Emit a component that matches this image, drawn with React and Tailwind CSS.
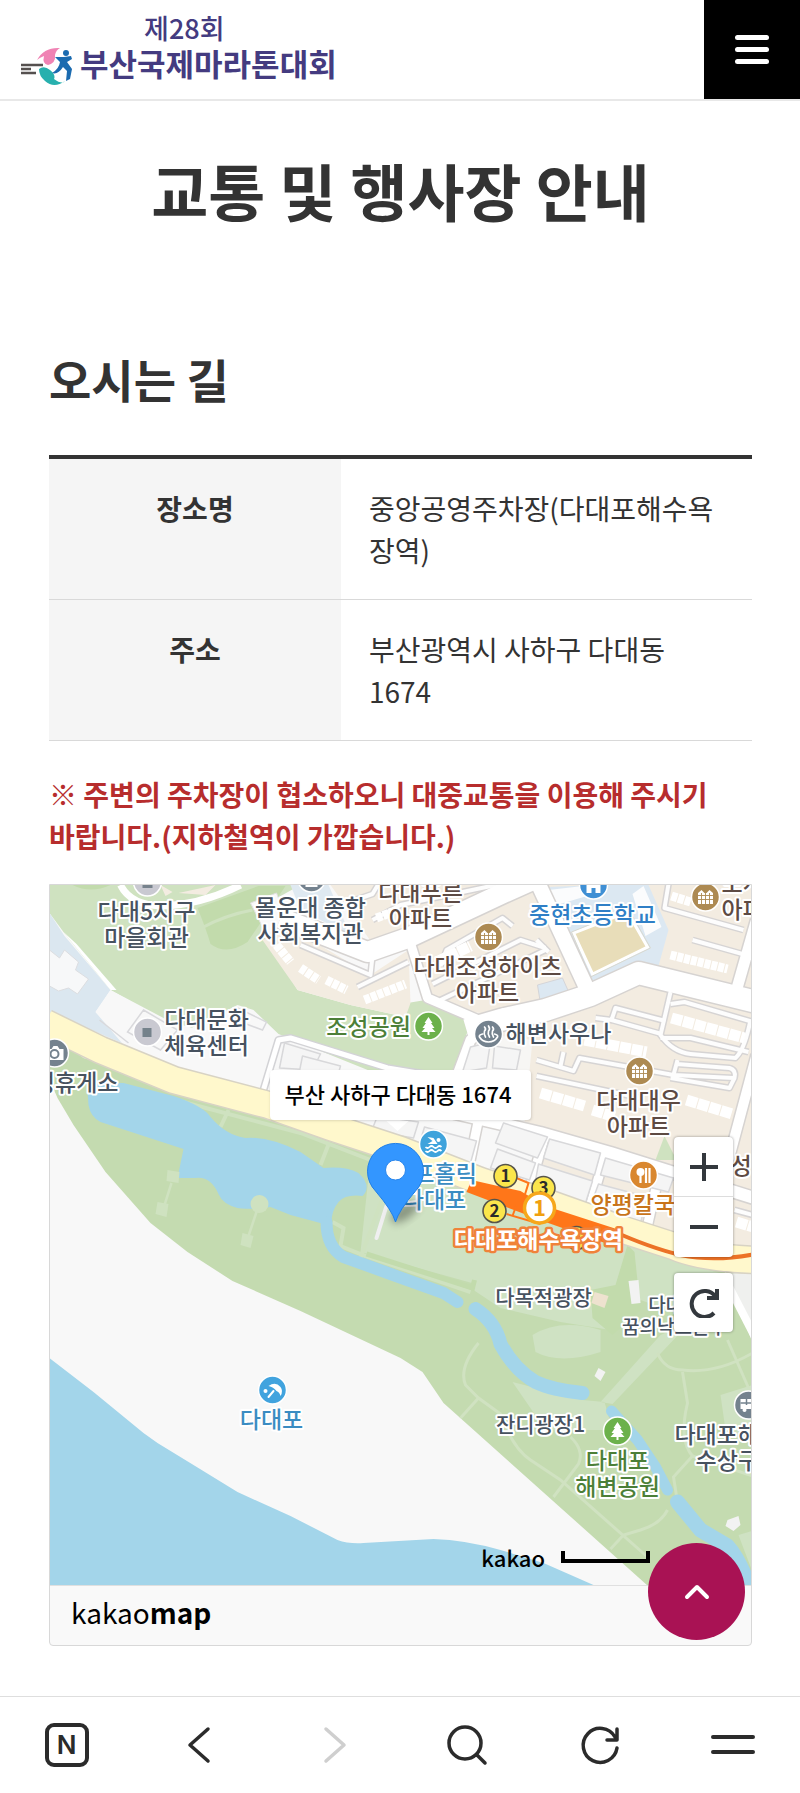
import React from 'react';

const places = [
    { label: '장소명', value: '중앙공영주차장(다대포해수욕장역)' },
    { label: '주소', value: '부산광역시 사하구 다대동 1674' },
];

const GRAY = '#47525f';
const BROWN = '#5d4a43';
const GREEN = '#4c7f38';
const BLUE = '#2f7fc6';
const SKY = '#3a8cc2';

// x is the anchor point, y the baseline of the first line
const mapLabels = [
    { x: 146, y: 920, fill: GRAY, lines: ['다대5지구', '마을회관'] },
    { x: 310, y: 916, fill: GRAY, lines: ['몰운대 종합', '사회복지관'] },
    { x: 420, y: 901, fill: BROWN, lines: ['다대푸른', '아파트'] },
    { x: 487, y: 975, fill: BROWN, lines: ['다대조성하이츠', '아파트'] },
    { x: 592, y: 923, fill: BLUE, lines: ['중현초등학교'] },
    { x: 721, y: 892, fill: BROWN, anchor: 'start', lines: ['도시', '아파트'] },
    { x: 368, y: 1035, fill: GREEN, lines: ['조성공원'] },
    { x: 558, y: 1042, fill: GRAY, lines: ['해변사우나'] },
    { x: 206, y: 1028, fill: GRAY, lines: ['다대문화', '체육센터'] },
    { x: 118, y: 1091, fill: GRAY, anchor: 'end', lines: ['성휴게소'] },
    { x: 638, y: 1109, fill: BROWN, lines: ['다대대우', '아파트'] },
    { x: 590, y: 1213, fill: '#c8741a', anchor: 'start', lines: ['양평칼국수'] },
    { x: 730, y: 1174, fill: BROWN, anchor: 'start', lines: ['성원'] },
    { x: 434, y: 1182, fill: SKY, lines: ['서프홀릭', '다대포'] },
    { x: 543, y: 1305, fill: GRAY, size: 21, lines: ['다목적광장'] },
    { x: 674, y: 1312, fill: GRAY, size: 19, gap: 22, lines: ['다대포', '꿈의낙조분수'] },
    { x: 540, y: 1432, fill: GRAY, size: 21, lines: ['잔디광장1'] },
    { x: 271, y: 1428, fill: SKY, lines: ['다대포'] },
    { x: 617, y: 1469, fill: GREEN, lines: ['다대포', '해변공원'] },
    { x: 748, y: 1443, fill: GRAY, lines: ['다대포해수욕장', '수상구조대'] },
];

const mainRoads = [
    { w: 20, d: 'M280 918 L367 952 L407 938 L503 893 L550 872' },
    { w: 22, d: 'M466 1030 L500 1020 L545 1010 L590 995 L638 973 L760 1003' },
    { w: 15, d: 'M536 880 L588 992' },
    { w: 9, d: 'M409 940 L427 998 L478 1020' },
    { w: 11, d: 'M756 920 L736 990' },
    { w: 10, d: 'M756 1055 L728 1160' },
    { w: 10, d: 'M505 1012 L470 1040 L455 1080' },
    { w: 12, d: 'M380 1095 L450 1112 L540 1133 L610 1153 L680 1175 L760 1200' },
    { w: 9, d: 'M480 1110 L468 1168 M546 1130 L530 1185 M606 1150 L588 1212 M660 1168 L646 1230' },
];

const lanes = [
    'M692 940 L742 954',
    'M668 884 L664 908 L743 930',
    'M670 992 L660 1035 Q672 1052 690 1054 L735 1058 Q744 1050 750 1020',
    'M670 1004 L684 1002 L756 1023',
    'M595 1018 L611 1020 L615 1008 L665 1021',
    'M611 1020 L661 1034',
    'M660 1038 L690 1038 L748 1052',
    'M677 1060 L673 1075 L733 1078 M676 1064 L729 1068 Q736 1070 734 1078 L729 1088 L670 1078',
    'M536 1060 L573 1071 L579 1058 L673 1075',
    'M563 1052 L560 1066',
    'M536 1076 L640 1098',
    'M357 987 L408 962',
    'M300 945 L370 975 L372 956',
    'M440 966 L446 950 L502 918 L512 926',
    'M432 984 L520 940 L545 948',
    'M340 905 L372 894 L378 884',
    'M372 920 L400 905 L500 884',
    'M440 1000 L520 962 L545 950',
    'M536 940 L548 952',
    'M736 1190 L756 1196 M734 1210 L756 1216',
];

const blocks = [
    'M503 1123 L547 1137 L537 1158 L495 1143 Z',
    'M497 1149 L535 1163 L529 1180 L490 1168 Z',
    'M424 1127 L476 1141 L470 1163 L418 1147 Z',
    'M377 1116 L418 1122 L413 1138 L371 1131 Z',
    'M549 1139 L600 1153 L594 1175 L543 1158 Z',
    'M538 1164 L592 1181 L585 1203 L534 1186 Z',
    'M605 1158 L673 1178 L668 1192 L600 1175 Z',
    'M598 1184 L647 1197 L640 1223 L591 1203 Z',
    'M284 1043 L320 1054 L312 1070 L279 1068 Z',
    'M302 1056 L340 1066 L336 1080 L298 1076 Z',
    'M470 1047 L490 1042 L486 1068 L462 1072 Z',
    'M494 1046 L520 1050 L516 1070 L492 1068 Z',
];

const parkPaths = [
    'M478 1343 Q458 1368 465 1385 L478 1398 L500 1414 Q512 1448 530 1460 L560 1480 L647 1557',
    'M478 1398 L460 1418',
    'M570 1437 Q584 1450 578 1464 L553 1497',
    'M667 1510 Q660 1524 640 1530 L623 1535 L610 1549',
    'M657 1353 Q664 1370 682 1370 Q716 1374 752 1353',
    'M682 1372 L687 1403 Q678 1440 692 1456 L673 1477 L676 1496',
    'M727 1340 L748 1388',
    'M692 1456 L752 1476',
];

function Spot({ x, y, fill, children }) {
    return (
        <g transform={`translate(${x} ${y})`}>
            <circle r="14" fill={fill} stroke="#fff" strokeWidth="1.5" />
            {children}
        </g>
    );
}

function Apartment({ x, y }) {
    return (
        <Spot x={x} y={y} fill="#ad8a52">
            <path d="M-7.5 7 V-4 L-4 -7 L-1 -4 L1 -4 L4 -7 L7.5 -4 V7 Z" fill="#fff" />
            <path d="M-7.5 -1.5 H7.5 M-7.5 2.5 H7.5 M-4 -4 V7 M0 -4 V7 M4 -4 V7" stroke="#ad8a52" strokeWidth=".9" />
        </Spot>
    );
}

function Tree({ x, y }) {
    return (
        <Spot x={x} y={y} fill="#6cb14b">
            <path d="M0 -9 L4 -3 H2.5 L6 2 H3.5 L7 6 H1 V9 H-1 V6 H-7 L-3.5 2 H-6 L-2.5 -3 H-4 Z" fill="#fff" />
        </Spot>
    );
}

function Exit({ x, y, n }) {
    return (
        <g>
            <circle cx={x} cy={y} r="11.5" fill="#fbe64c" stroke="#57544a" strokeWidth="1.6" />
            <text x={x} y={y + 6} textAnchor="middle" fontSize="17" fontWeight="700" fill="#2b2b2b">{n}</text>
        </g>
    );
}

function MapDrawing() {
    return (
        <svg
            viewBox="49 885 702 700"
            preserveAspectRatio="xMidYMid slice"
            className="block h-[700px] w-full font-['Noto_Sans_CJK_KR',sans-serif]"
            role="img"
            aria-label="다대포해수욕장역 주변 지도"
        >
            <defs>
                <filter id="soft" x="-50%" y="-50%" width="200%" height="200%">
                    <feGaussianBlur stdDeviation="4" />
                </filter>
            </defs>
            <rect x="40" y="880" width="720" height="720" fill="#f8f8f8" />

            {/* hillside park */}
            <path d="M49 885 H300 L273 900 L262 930 L297 990 L350 1005 L405 1017 L407 1003 L425 1000 L472 1018 L450 1078 L387 1078 L278 1034 L253 1010 L237 1005 L183 1032 L163 1018 L110 990 L63 932 L49 913 Z" fill="#cfe2c0" />
            <path d="M258 886 L197 908 Q206 930 210 944 Q226 956 247 942 L262 920 L285 886 Z M72 885 Q90 894 110 885 Z" fill="#c2dbac" />
            <path d="M201 928 Q225 915 252 910" fill="none" stroke="#cfe2c0" strokeWidth="3" />
            <path d="M49 913 L64 936 L110 990 L95 1012 L126 1045 L49 1012 Z" fill="#dbe7f0" />
            <path d="M49 950 L59 958 L64 950 L78 962 L75 970 L88 979 L77 994 L68 988 L58 991 L49 986 Z" fill="#f7f8f9" stroke="#dcdde0" />
            <path d="M63 932 L110 990 L116 990 L76 944 Z" fill="#fff" />
            <path d="M110 990 L163 1020 L200 1030 L278 1036 L262 1092 L124 1046 L95 1012 Z" fill="#f8f8f8" />
            <path d="M143 1010 L177 1030 L160 1050 L127 1032 Z M99 1020 L128 1043 M237 1008 L266 1022 L262 1030 L235 1020 Z" fill="none" stroke="#d9d9dc" strokeWidth="1.5" />
            <path d="M262 1093 L278 1040 L290 1038 L387 1068 L460 1080" fill="none" stroke="#d3d3d6" strokeWidth="8" strokeLinejoin="round" />
            <path d="M262 1093 L278 1040 L290 1038 L387 1068 L460 1080" fill="none" stroke="#fff" strokeWidth="5" strokeLinejoin="round" />
            <path d="M120 885 Q130 905 160 906 Q200 905 240 885" fill="none" stroke="#fff" strokeWidth="7" />
            <path d="M160 885 L172 892 L165 896 M178 893 L215 885 L205 895 Z" fill="#f3ece1" />

            {/* housing */}
            <path d="M262 940 L290 928 L370 975 L408 950 L410 1003 L405 1017 L350 1005 L297 990 Z" fill="#f3ece1" />
            <path d="M330 885 H755 V1250 L673 1235 L547 1195 L530 1130 L470 1110 L500 1015 L470 1012 L430 1000 L413 950 L373 945 Z" fill="#f3ece1" />
            <path d="M470 1032 L532 1040 L524 1122 L450 1105 Z" fill="#f7f6f4" />
            <path d="M290 885 H328 L350 935 L300 910 Z" fill="#dfe9f1" />
            <path d="M250 903 L276 893 L288 925 L266 935 Z" fill="#f8f8f8" stroke="#e0e0e0" />
            <path d="M547 887 L600 885 H648 L668 930 L658 966 L638 963 L588 988 Z" fill="#dce8f2" />
            <path d="M537 985 L562 978 L570 996 L541 1010 Z" fill="#dce8f2" stroke="#d5d5d8" />
            <path d="M632 894 L643 886 L661 927 L645 936 Z M548 890 L600 884 L590 895 L556 905 Z" fill="#fbfcfd" />
            <path d="M573 933 L627 912 L647 947 L592 974 Z" fill="#e8ddb9" stroke="#fff" strokeWidth="3" />
            <path d="M571 932 L628 909 L650 948 L590 977 Z" fill="none" stroke="#d9d9d0" />

            {mainRoads.map((r) => (
                <path key={r.d} d={r.d} fill="none" stroke="#d6d3d1" strokeWidth={r.w + 3} strokeLinejoin="round" />
            ))}
            {lanes.map((d) => (
                <path key={d} d={d} fill="none" stroke="#d6d4d4" strokeWidth="7" strokeLinejoin="round" />
            ))}
            {lanes.map((d) => (
                <path key={d} d={d} fill="none" stroke="#fdfdfd" strokeWidth="4" strokeLinejoin="round" />
            ))}
            {mainRoads.map((r) => (
                <path key={r.d} d={r.d} fill="none" stroke="#fff" strokeWidth={r.w} strokeLinejoin="round" />
            ))}
            {blocks.map((d) => (
                <path key={d} d={d} fill="#f5f5f5" stroke="#d8d8da" strokeWidth="1.5" strokeLinejoin="round" />
            ))}

            {/* rows of houses */}
            <g fill="none" stroke="#fff" strokeWidth="9" strokeDasharray="6 1">
                <path d="M670 955 L727 969" />
                <path d="M671 896 L690 902" />
                <path d="M300 968 L318 980 M326 980 L346 990" />
                <path d="M364 1000 L405 984" />
                <path d="M276 945 L290 962" />
                <path d="M376 918 L392 912" />
            </g>
            <g fill="none" stroke="#fff" strokeWidth="11" strokeDasharray="11 1">
                <path d="M671 1018 L744 1038" />
                <path d="M584 1040 L646 1052" />
                <path d="M540 1093 L584 1106" />
                <path d="M686 1100 L732 1114" />
                <path d="M592 1110 L615 1117" />
                <path d="M736 1222 L756 1228" />
                <path d="M436 962 L470 946" />
            </g>
            <path d="M664 1136 L676 1160 L655 1160 Z" fill="#cfe2c0" />

            {/* seaside park */}
            <path d="M45 1030 L83 1058 L173 1085 L300 1125 L368 1145 L470 1180 L640 1243 L720 1268 L755 1270 V1590 H652 L443 1403 L422 1372 L400 1358 L383 1350 L300 1311 L232 1281 L187 1252 L150 1223 L105 1172 L73 1125 L57 1098 L45 1070 Z" fill="#c4dbb0" />
            <path d="M370 1158 L470 1186 L640 1250 L722 1274 L734 1300 L690 1318 L640 1300 L610 1330 L560 1322 L500 1308 L473 1290 L475 1284 L360 1252 Z" fill="#cfe2c3" />
            <path d="M720 1274 L755 1272 V1350 L735 1300 Z" fill="#eff0ee" />
            <path d="M722 1274 L756 1340" stroke="#fff" strokeWidth="8" />
            <path d="M627 1245 L634 1252 L640 1310 L612 1335 L592 1318 L590 1290 L615 1285 Z" fill="#c2dbac" />
            <path d="M660 1335 L600 1402 L612 1404 L690 1322 Z M532 1335 Q560 1318 600 1330 L600 1352 Q560 1365 535 1352 Z M512 1382 L582 1400 L604 1402 L612 1430 H545 Z M720 1395 L752 1385 V1440 L725 1430 Z M738 1535 L755 1530 V1580 Z" fill="#cfe2c3" />
            <path d="M160 1096 L300 1133 L370 1160 M228 1110 L220 1127 M329 1142 L320 1165 M385 1190 L360 1258 M332 1222 L343 1228 L340 1246 L365 1256 L470 1292" fill="none" stroke="#cfe2c0" strokeWidth="4" />
            <path d="M366 1254 L472 1288 L474 1280" fill="none" stroke="#c2dbac" strokeWidth="5" />
            {parkPaths.map((d) => (
                <path key={d} d={d} fill="none" stroke="#d0e2c1" strokeWidth="3" />
            ))}

            {/* water */}
            <g fill="#a3d5ea">
                <path d="M86 1077 Q100 1083 123 1083 L173 1096 Q203 1106 210 1117 Q225 1135 245 1138 Q268 1136 300 1152 L323 1168 Q345 1166 358 1173 Q372 1186 362 1196 Q345 1194 338 1202 Q330 1212 331 1226 L290 1215 L270 1207 Q245 1210 237 1208 Q222 1204 218 1194 Q210 1176 195 1178 L177 1178 L183 1149 L100 1122 Q90 1117 88 1105 Z" />
                <path d="M45 1355 L93 1392 L143 1433 L157 1443 L193 1465 L237 1492 L290 1516 L337 1540 Q348 1544 363 1543 L433 1539 Q465 1540 500 1550 L543 1563 L593 1585 V1590 H45 Z" />
            </g>
            <g fill="none" stroke="#a3d5ea" strokeLinecap="round" strokeLinejoin="round">
                <path d="M326 1222 Q326 1247 343 1257 L390 1274 L443 1293 L457 1302" strokeWidth="12" />
                <path d="M475 1309 Q495 1322 500 1344 Q514 1370 535 1382 Q552 1390 582 1393" strokeWidth="14" />
                <path d="M611 1411 L637 1440 L655 1467 L667 1490" strokeWidth="11" />
                <path d="M677 1502 L700 1530 L727 1546 Q738 1558 748 1585" strokeWidth="15" />
            </g>
            <g fill="#cfe2c0">
                <path d="M167 1170 L179 1172 L178 1183 L166 1181 Z M157 1202 L168 1204 L166 1217 L155 1214 Z M242 1233 L253 1236 L250 1248 L240 1245 Z" />
                <circle cx="259" cy="1204" r="9" />
                <path d="M171 1183 L164 1205 M256 1212 L248 1236" stroke="#cfe2c0" strokeWidth="2.5" />
            </g>
            <path d="M386 1206 L376 1238" stroke="#efeff0" strokeWidth="4" strokeLinecap="round" />
            <path d="M598 1368 L605 1372 L600 1381 L594 1376 Z M628 1281 L638 1280 L640 1303 L631 1304 Z M727 1520 L738 1516 L740 1525 L733 1531 L725 1526 Z" fill="#f2f2f2" />
            <path d="M594 1292 L608 1296 L604 1308 L591 1303 Z" fill="#eee2cf" />

            {/* coastal road and subway line */}
            <path d="M45 1023 L100 1050 L173 1080 L268 1105 L330 1127 L400 1150 L480 1181 L547 1203 L620 1229 L673 1246 Q700 1258 755 1260" fill="none" stroke="#d8d3c4" strokeWidth="29" />
            <path d="M45 1023 L100 1050 L173 1080 L268 1105 L330 1127 L400 1150 L480 1181 L547 1203 L620 1229 L673 1246 Q700 1258 755 1260" fill="none" stroke="#fff8cc" strokeWidth="26" />
            <path d="M471 1180 L520 1191 L545 1206 L616 1229 L613 1246 L545 1222 L466 1192 Z" fill="#ff7619" />
            <path d="M516 1178 L528 1183 L524 1196 M506 1214 L540 1224 M516 1205 L512 1216" fill="none" stroke="#ff7619" strokeWidth="2" />
            <path d="M610 1230 Q650 1248 680 1255 Q715 1262 755 1254" fill="none" stroke="#ec7226" strokeWidth="4" />

            {/* points of interest */}
            <Spot x="147" y="882" fill="#c9c9d1"><rect x="-5" y="1" width="10" height="5" fill="#77828c" /></Spot>
            <Spot x="311" y="878" fill="#74828e"><path d="M-6 8 H6" stroke="#fff" strokeWidth="2" /></Spot>
            <Spot x="147" y="1032" fill="#c9c9d1"><rect x="-5" y="-4" width="9" height="9" fill="#75828b" /></Spot>
            <Spot x="54" y="1053" fill="#74828e">
                <path d="M-8 -4 H-3 L-1 -7 H3 L5 -4 H9 V7 H-8 Z" fill="#fff" />
                <circle r="4" cy="1" fill="#fff" stroke="#74828e" strokeWidth="2" />
            </Spot>
            <Spot x="593" y="885" fill="#3f8fd4"><path d="M-7 8 V0 L0 -5 L7 0 V8 H2 V3 H-2 V8 Z" fill="#fff" /></Spot>
            <Apartment x="488" y="937" />
            <Apartment x="705" y="897" />
            <Apartment x="639" y="1071" />
            <Tree x="428" y="1026" />
            <Tree x="617" y="1431" />
            <Spot x="488" y="1034" fill="#74828e">
                <path d="M-6 0 Q-10 1 -9 3 Q-6 8 0 8 Q6 8 9 3 Q10 1 6 0 M-4 -7 Q-2 -5 -4 -3 Q-5 0 -3 3 M0 -8 Q2 -5 0 -3 Q-1 0 1 3 M4 -7 Q6 -5 4 -3 Q3 0 5 3" fill="none" stroke="#fff" strokeWidth="1.7" strokeLinecap="round" />
            </Spot>
            <Spot x="433" y="1144" fill="#3fa3dc">
                <path d="M-8 3 Q-6 5 -4 3 Q-2 1 0 3 Q2 5 4 3 Q6 1 8 3 M-8 7 Q-6 9 -4 7 Q-2 5 0 7 Q2 9 4 7 Q6 5 8 7" fill="none" stroke="#fff" strokeWidth="1.7" />
                <path d="M-6 -7 L0 -6 L4 0 L-6 0 L-1 -3 Z" fill="#fff" />
                <circle cx="5" cy="-4" r="2" fill="#fff" />
            </Spot>
            <Spot x="643" y="1175" fill="#d9872f">
                <circle cx="-3" cy="-3" r="4" fill="#fff" />
                <path d="M-3 0 V8 M2.500 -7 V8 M6 -7 V8" stroke="#fff" strokeWidth="2.200" />
            </Spot>
            <Spot x="272" y="1390" fill="#41a3de">
                <path d="M-4 -4 Q3 -9 8 -3 Q11 1 8 6 Q7 2 4 1 Q1 -3 -4 -4 Z" fill="#fff" />
                <path d="M1 1 L-4 7" stroke="#fff" strokeWidth="2" strokeLinecap="round" />
                <circle cx="-7" cy="1" r="2" fill="#fff" />
            </Spot>
            <Spot x="748" y="1405" fill="#74828e">
                <path d="M-8 -6 H8 V4 H-8 Z" fill="#fff" />
                <path d="M-8 -2 H8 M-2 -6 V0" stroke="#74828e" strokeWidth="1.5" />
                <circle cx="-4" cy="5" r="2" fill="#fff" />
            </Spot>

            {mapLabels.map((l) => (
                <text
                    key={`${l.x}-${l.y}`}
                    textAnchor={l.anchor || 'middle'}
                    fontSize={l.size || 23}
                    fontWeight="500"
                    fill={l.fill}
                    stroke="#fff"
                    strokeWidth="4"
                    strokeLinejoin="round"
                    paintOrder="stroke"
                >
                    {l.lines.map((line, i) => (
                        <tspan key={line} x={l.x} y={l.y + i * (l.gap || 26)}>{line}</tspan>
                    ))}
                </text>
            ))}

            {/* station, exit 4 sits behind its name */}
            <Exit x={505} y={1176} n="1" />
            <Exit x={494} y={1211} n="2" />
            <Exit x={543} y={1188} n="3" />
            <Exit x={576} y={1238} n="4" />
            <circle cx="539" cy="1208" r="15" fill="#fff" stroke="#f6a71b" strokeWidth="3.500" />
            <text x="539" y="1216" textAnchor="middle" fontSize="22" fontWeight="700" fill="#f0a010">1</text>
            <text x="538" y="1248" textAnchor="middle" fontSize="23" fontWeight="700" fill="#fff" stroke="#f0823a" strokeWidth="5" strokeLinejoin="round" paintOrder="stroke">다대포해수욕장역</text>

            {/* marker */}
            <ellipse cx="404" cy="1212" rx="16" ry="7" fill="#000" opacity=".35" transform="rotate(-35 404 1212)" filter="url(#soft)" />
            <path d="M395 1222 Q392 1211 375 1191 A28 28 0 1 1 415 1191 Q398 1211 395 1222 Z" fill="#3396ff" stroke="#1f7fe8" strokeWidth="1" />
            <circle cx="395" cy="1170" r="10" fill="#fff" stroke="#2a86ec" />
            <path d="M386 1121 H408 L397 1131 Z" fill="#fff" />
        </svg>
    );
}

function Logo() {
    return (
        <a href="#home" className="flex items-end pl-5 text-[#443b80]">
            <svg viewBox="0 0 54 42" className="mb-3 h-[42px] w-[54px]" aria-hidden="true">
                <path d="M1 20 H23 M1 24 H11 M1 28 H16" stroke="#55504f" strokeWidth="2.5" />
                <path d="M17 15 Q24 2 40 3 Q36 5 35 10 Q36 18 28 20 Q22 19 24 11 Q19 13 17 15 Z" fill="#f083b4" />
                <path d="M19 24 Q24 20 30 25 Q36 30 34 34 Q42 40 45 36 Q34 44 25 36 Q19 31 19 24 Z" fill="#27b0ae" />
                <circle cx="46" cy="8" r="3" fill="#1b6bb0" />
                <path d="M35 12 L44 12 L51 11 L52 14 L47 17 L52 24 L50 34 L46 36 L47 26 L43 22 Q38 30 32 28 Q39 24 40 17 Z" fill="#1b6bb0" />
            </svg>
            <span className="flex flex-col items-center pb-[18px] pl-[6px]">
                <span className="pr-12 text-[27px] leading-[34px] font-medium">제28회</span>
                <span className="text-[31px] leading-[36px] font-bold">부산국제마라톤대회</span>
            </span>
        </a>
    );
}

function NavIcon({ children, color }) {
    return (
        <svg viewBox="0 0 48 48" className="h-12 w-12" fill="none" stroke={color || '#2b2b2b'} strokeWidth="3.500" strokeLinecap="round" strokeLinejoin="round" aria-hidden="true">
            {children}
        </svg>
    );
}

function BottomBar() {
    return (
        <nav className="sticky bottom-0 z-10 grid h-[97px] grid-cols-6 place-items-center border-t border-[#dedede] bg-white">
            <button type="button" aria-label="홈" className="cursor-pointer">
                <span className="flex h-11 w-11 items-center justify-center rounded-[9px] border-4 border-[#2b2b2b] font-['Inter',sans-serif] text-[26px] leading-none font-semibold text-[#2b2b2b]">
                    N
                </span>
            </button>
            <button type="button" aria-label="뒤로" className="cursor-pointer">
                <NavIcon><path d="M32 8 L14 24 L32 40" /></NavIcon>
            </button>
            <button type="button" aria-label="앞으로" className="cursor-pointer">
                <NavIcon color="#cfcfcf"><path d="M17 8 L35 24 L17 40" /></NavIcon>
            </button>
            <button type="button" aria-label="검색" className="cursor-pointer">
                <NavIcon>
                    <circle cx="22" cy="22" r="16" />
                    <path d="M34 34 L42 42" />
                </NavIcon>
            </button>
            <button type="button" aria-label="새로고침" className="cursor-pointer">
                <NavIcon>
                    <path d="M41 27 A17 17 0 1 1 39 16 M41 8 V19 H31" />
                </NavIcon>
            </button>
            <button type="button" aria-label="메뉴" className="cursor-pointer">
                <NavIcon><path d="M4 16 H44 M4 31 H44" strokeWidth="4" /></NavIcon>
            </button>
        </nav>
    );
}

export default function App() {
    return (
        <div className="flex min-h-screen flex-col bg-white font-['Noto_Sans_CJK_KR',sans-serif] text-[#333]">
            <header className="flex h-[101px] justify-between border-b-2 border-[#e8e8e8]">
                <Logo />
                <button type="button" aria-label="전체 메뉴" className="flex w-24 cursor-pointer flex-col items-center justify-center gap-[7px] bg-black">
                    <span className="h-[5px] w-[34px] rounded-full bg-white" />
                    <span className="h-[5px] w-[34px] rounded-full bg-white" />
                    <span className="h-[5px] w-[34px] rounded-full bg-white" />
                </button>
            </header>

            <main className="grow pr-12 pb-12 pl-[49px]">
                <h1 className="pt-[52px] text-center text-[62px] leading-[74px] font-bold">교통 및 행사장 안내</h1>

                <h2 className="mt-[123px] text-[46px] leading-[56px] font-bold">오시는 길</h2>

                <table className="mt-[49px] w-full table-fixed border-t-4 border-[#333] text-[28px] leading-[42px]">
                    <tbody>
                        {places.map((p) => (
                            <tr key={p.label} className="border-b border-[#d9d9d9]">
                                <th scope="row" className="w-[292px] bg-[#f5f5f5] px-7 py-7 align-top font-bold">{p.label}</th>
                                <td className="px-7 py-7 align-top">{p.value}</td>
                            </tr>
                        ))}
                    </tbody>
                </table>

                <p className="mt-8 text-[28px] leading-[42px] font-bold break-keep text-[#b72d2d]">
                    ※ 주변의 주차장이 협소하오니 대중교통을 이용해 주시기 바랍니다.(지하철역이 가깝습니다.)
                </p>

                <section className="mt-[27px] overflow-hidden rounded-b-[4px] border border-[#d8d8d8] bg-[#f9f9f9]">
                    <div className="relative">
                        <MapDrawing />

                        <div className="absolute top-[185px] left-1/2 -translate-x-1/2 rounded-[4px] bg-white px-[15px] pr-5 pb-1 text-[22px] leading-[46px] font-medium whitespace-nowrap text-black shadow">
                            부산 사하구 다대동 1674
                        </div>

                        {/* zoom controls */}
                        <div className="absolute top-[252px] right-[18px] flex flex-col gap-4">
                            <div className="divide-y divide-[#ddd] rounded-[4px] bg-white shadow-[0_0_3px_rgba(0,0,0,0.4)]">
                                <button type="button" aria-label="확대" className="flex h-[60px] w-[59px] cursor-pointer items-center justify-center">
                                    <svg viewBox="0 0 30 30" className="h-[30px] w-[30px]" stroke="#33383d" strokeWidth="4"><path d="M1 15 H29 M15 1 V29" /></svg>
                                </button>
                                <button type="button" aria-label="축소" className="flex h-[60px] w-[59px] cursor-pointer items-center justify-center">
                                    <svg viewBox="0 0 30 30" className="h-[30px] w-[30px]" stroke="#33383d" strokeWidth="4"><path d="M1 15 H29" /></svg>
                                </button>
                            </div>
                            <button type="button" aria-label="초기화" className="flex h-[59px] w-[59px] cursor-pointer items-center justify-center rounded-[4px] bg-white shadow-[0_0_3px_rgba(0,0,0,0.4)]">
                                <svg viewBox="0 0 30 30" className="h-[30px] w-[30px]" fill="none" stroke="#33383d" strokeWidth="4"><path d="M25 25 A13 13 0 1 1 26 8 M28 1 V10 H18" /></svg>
                            </button>
                        </div>

                        <div className="absolute right-[101px] bottom-3 flex items-center gap-4 text-black">
                            <span className="text-[22px] leading-[32px] font-medium">kakao</span>
                            <span className="h-3 w-[89px] border-4 border-t-0 border-black" />
                        </div>
                    </div>
                    <div className="flex h-[60px] items-center border-t border-[#e0e0e0] px-[21px] pb-2 text-[28px] leading-none text-black">
                        <span>kakao<b className="font-bold">map</b></span>
                    </div>
                </section>
            </main>

            <a href="#top" aria-label="맨 위로" className="fixed right-[55px] bottom-[153px] z-20 flex h-[97px] w-[97px] items-center justify-center rounded-full bg-[#a91254]">
                <svg viewBox="0 0 26 16" className="h-4 w-[26px]" fill="none" stroke="#fff" strokeWidth="4" strokeLinecap="round" strokeLinejoin="round"><path d="M3 13 L13 3 L23 13" /></svg>
            </a>

            <BottomBar />
        </div>
    );
}
